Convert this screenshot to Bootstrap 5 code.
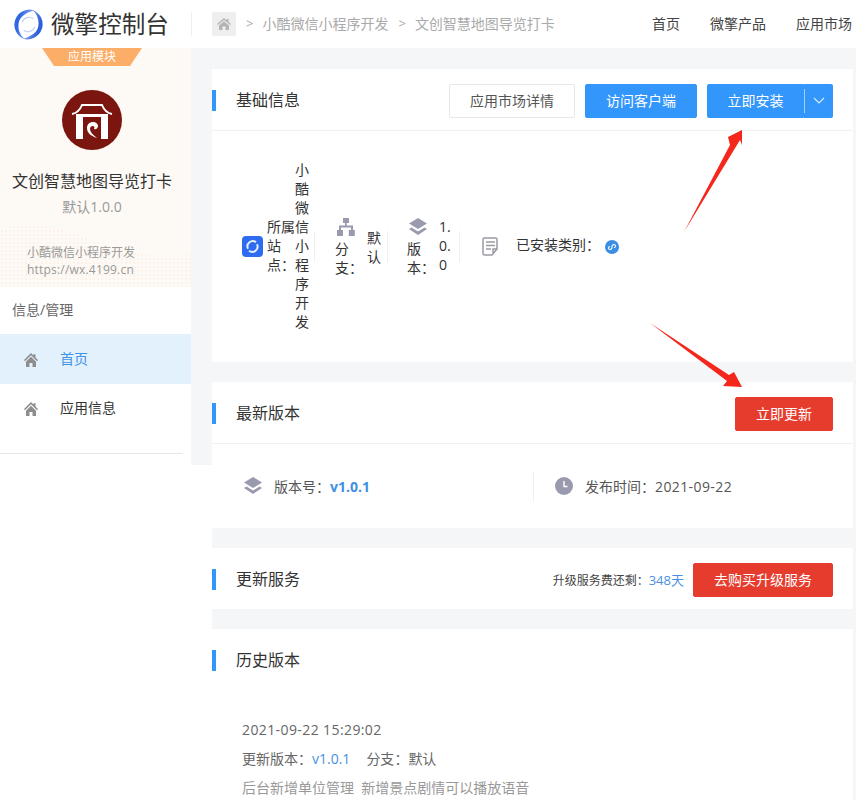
<!DOCTYPE html>
<html lang="zh-CN">
<head>
    <meta charset="UTF-8">
    <meta name="viewport" content="width=device-width, initial-scale=1.0">
    <title>微擎控制台</title>
    <link href="https://cdn.jsdelivr.net/npm/bootstrap@5.3.0/dist/css/bootstrap.min.css" rel="stylesheet">
    <style>
        html, body { height: 800px; overflow: hidden; }
        body { font-family: "Open Sans", "Noto Sans CJK SC", sans-serif; font-size: 14px; line-height: 19px; color: #333; background: #fff; position: relative; }
        .mid-colon { font-family: "Noto Sans CJK TC", sans-serif; }
        .date-num { letter-spacing: .4px; }

        /* шапка */
        .top-bar { height: 48px; }
        .brand-box { width: 191px; padding-left: 13px; gap: 7px; }
        .brand-text { font-size: 23.6px; line-height: 30px; color: #333; }
        .top-sep { width: 1px; height: 24px; background: #eee; }
        .crumbs { padding-left: 20px; color: #aaa; }
        .crumbs > span:not(.crumb-home) { margin-bottom: 2px; }
        .crumb-home { width: 24px; height: 24px; background: #eee; border-radius: 2px; }
        .crumb-gt { margin: 0 9px 0 10px; font-size: 13px; }
        .top-links { gap: 30px; padding: 0 4px 2px 0; color: #444; }

        /* левая колонка */
        .page-wrap { height: 752px; }
        .side-col { width: 191px; height: 417px; }
        .gray-strip { width: 21px; height: 417px; background: #f4f6f8; }
        .app-box { height: 239px; padding-right: 7px; background: #fdf9f5; overflow: hidden; position: relative; }
        .app-tab { width: 100px; height: 18px; margin: 0 auto; background: #fcae69; color: #fff; font-size: 12px; line-height: 18px; clip-path: polygon(0 0, 100% 0, 88% 100%, 12% 100%); }
        .app-logo { width: 60px; height: 60px; margin: 24px auto 0; }
        .app-name { margin-top: 20px; font-size: 16px; line-height: 22px; color: #333; }
        .app-ver { margin-top: 5px; color: #999; }
        .app-site { position: relative; margin-top: 28px; padding-left: 27px; font-size: 12px; line-height: 17px; color: #999; }
        .app-site-url { font-size: 12px; letter-spacing: .2px; }
        .dots-bg { position: absolute; left: 0; bottom: 0; }
        .side-head { height: 47px; padding: 13px 12px 0; color: #666; }
        .side-link { height: 50px; padding-left: 24px; gap: 22px; color: #333; }
        .side-link svg { margin-top: 2px; }
        .side-link span { margin-bottom: 2px; }
        .side-link.on-page { background: #e3f1fd; color: #3f93e8; }
        .side-link.short-link { height: 48px; }
        .side-line { margin: 21px 8px 0 0; height: 1px; background: #e6e6e6; }

        /* панели */
        .main-col { background: #f4f6f8; padding: 21px 3px 0 0; }
        .panel-box { border: 0; border-radius: 0; margin-bottom: 20px; }
        .panel-top { background: #fff; border-bottom: 1px solid #f1f1f1; border-radius: 0 !important; height: 62px; padding: 2px 20px 0 0; }
        .panel-top.no-line { border-bottom: 0; height: 61px; }
        .panel-title { border-left: 4px solid #3296fa; height: 21px; padding-left: 20px; font-size: 16px; line-height: 21px; color: #333; }
        .btn-group-gap { gap: 10px; }
        .btn-plain, .btn-blue, .btn-redd { height: 34px; border-radius: 2px; font-size: 14px; line-height: 32px; padding: 0; }
        .btn-plain { width: 126px; background: #fff; border: 1px solid #e8e8e8; color: #555; }
        .btn-blue { width: 112px; background: #3296fa; border: 1px solid #3296fa; color: #fff; }
        .btn-blue.split-main { width: 97px; border-radius: 2px 0 0 2px; }
        .split-arrow { width: 29px; height: 34px; background: #3296fa; border-radius: 0 2px 2px 0; position: relative; }
        .split-arrow::before { content: ""; position: absolute; left: 0; top: 5px; width: 1px; height: 24px; background: #a5cffb; }
        .btn-redd { background: #e63c2e; border: 1px solid #e63c2e; color: #fff; width: 98px; }
        .btn-redd.wide-btn { width: 140px; }

        .info-line { height: 231px; padding: 0 0 2px 30px; }
        .nudge-down { margin-top: 2px; }
        .cell-sep { width: 1px; height: 31px; background: #f0f0f0; }
        .narrow-label { width: 28px; }
        .narrow-value { width: 15px; word-break: break-all; }
        .stack-cell { width: 28px; margin-top: 4px; }
        .stack-icon { margin-left: 2px; margin-bottom: 3px; display: block; }
        .branch-cell { margin-left: 20px; }
        .branch-value { margin: 2px 0 0 4px; }
        .branch-sep { margin-left: 5px; }
        .version-cell { margin-left: 19px; }
        .version-value { margin-left: 4px; width: 14px; }
        .version-sep { margin-left: 6px; }
        .doc-icon { margin-left: 22px; }
        .doc-label { margin: 0 0 2px 17px; }
        .mini-icon { margin-left: 5px; }

        .ver-line { height: 84px; padding-left: 32px; color: #555; }
        .ver-left { width: 289px; gap: 12px; }
        .ver-num { color: #3f8fe4; font-weight: 700; font-size: 14px; }
        .ver-right { gap: 12px; padding-left: 21px; }
        .remain-text { font-size: 12px; color: #444; margin-right: 9px; }
        .remain-days { font-size: 13px; }
        .blue-text { color: #4a90e2; }

        .hist-body { padding: 30px 30px 0; color: #666; height: 130px; }
        .hist-row { margin-bottom: 10px; }
        .hist-note { color: #999; }

        .arrow-layer { position: absolute; left: 0; top: 0; pointer-events: none; }
    </style>
</head>
<body>
    <header class="top-bar d-flex align-items-center bg-white">
        <div class="brand-box d-flex align-items-center">
            <svg width="31" height="31" viewBox="0 0 32 32">
                <defs>
                    <linearGradient id="gr1" x1="0" y1="0.3" x2="1" y2="0.7"><stop offset="0.2" stop-color="#2f66e4"/><stop offset="1" stop-color="#b9c8f7"/></linearGradient>
                    <linearGradient id="gr2" x1="1" y1="0.7" x2="0" y2="0.3"><stop offset="0.2" stop-color="#2f5fdc"/><stop offset="1" stop-color="#b9c8f7"/></linearGradient>
                </defs>
                <path d="M22 1.500A15.500 15.500 0 0 0 12 31C7 27 4 19 6.500 12 8.500 7 15 3 22 1.500z" fill="url(#gr1)"/>
                <path d="M10 30.500A15.500 15.500 0 0 0 20 1C25 5 28 13 25.500 20 23.500 25 17 29 10 30.500z" fill="url(#gr2)"/>
                <path d="M21 10A7.500 7.500 0 0 0 9.500 13.500M11 22A7.500 7.500 0 0 0 22.500 18.500" fill="none" stroke="#c3cff7" stroke-width="1.200"/>
            </svg>
            <span class="brand-text">微擎控制台</span>
        </div>
        <span class="top-sep"></span>
        <div class="crumbs d-flex align-items-center flex-grow-1">
            <span class="crumb-home d-flex align-items-center justify-content-center">
                <svg width="14" height="12" viewBox="0 0 14 12"><path d="M7 0 0 6l1 1 6-5 6 5 1-1-2.500-2.100V1h-2v1.200zM2 7.500V12h3.500V8.500h3V12H12V7.500L7 3.300z" fill="#b5b5b5"/></svg>
            </span>
            <span class="crumb-gt">&gt;</span><span>小酷微信小程序开发</span><span class="crumb-gt">&gt;</span><span>文创智慧地图导览打卡</span>
        </div>
        <nav class="top-links d-flex">
            <span>首页</span><span>微擎产品</span><span>应用市场</span>
        </nav>
    </header>

    <div class="page-wrap d-flex">
        <aside class="side-col flex-shrink-0">
            <div class="app-box text-center">
                <svg class="dots-bg" width="191" height="70" viewBox="0 0 191 70">
                    <defs>
                        <pattern id="dotp" width="4" height="4" patternUnits="userSpaceOnUse"><circle cx="2" cy="2" r=".7" fill="#f9e5d3"/></pattern>
                    </defs>
                    <path d="M0 12C20 4 50 6 90 22s70 20 101 16V70H0z" fill="url(#dotp)"/>
                </svg>
                <div class="app-tab">应用模块</div>
                <svg class="app-logo d-block" viewBox="0 0 60 60">
                    <circle cx="30" cy="30" r="30" fill="#7a1510"/>
                    <path d="M10 24c5-1 8-4 10-9h20c2 5 5 8 10 9" fill="none" stroke="#fff" stroke-width="2"/>
                    <path d="M14 24h32v3H14zM14 27h7v22h-7zM39 27h7v22h-7z" fill="#fff"/>
                    <path d="M35 48c-6-2-10-5-10-10 0-4 3-6 6-6s5 2 5 4-2 4-4 3c1-2 0-3-1-3-2 0-3 1-3 3 0 3 3 6 7 9z" fill="#fff"/>
                </svg>
                <div class="app-name">文创智慧地图导览打卡</div>
                <div class="app-ver">默认1.0.0</div>
                <div class="app-site text-start">
                    <div>小酷微信小程序开发</div>
                    <div class="app-site-url">https://wx.4199.cn</div>
                </div>
            </div>
            <div class="side-head">信息/管理</div>
            <div class="side-link on-page d-flex align-items-center">
                <svg width="14" height="14" viewBox="0 0 14 12" preserveAspectRatio="none"><path d="M7 0 0 6l1 1 6-5 6 5 1-1-2.500-2.100V1h-2v1.200zM2 7.500V12h3.500V8.500h3V12H12V7.500L7 3.300z" fill="#8d8d8d"/></svg>
                <span>首页</span>
            </div>
            <div class="side-link short-link d-flex align-items-center">
                <svg width="14" height="14" viewBox="0 0 14 12" preserveAspectRatio="none"><path d="M7 0 0 6l1 1 6-5 6 5 1-1-2.500-2.100V1h-2v1.200zM2 7.500V12h3.500V8.500h3V12H12V7.500L7 3.300z" fill="#8d8d8d"/></svg>
                <span>应用信息</span>
            </div>
            <div class="side-line"></div>
        </aside>
        <div class="gray-strip flex-shrink-0"></div>

        <main class="main-col flex-grow-1">
            <section class="card panel-box">
                <div class="card-header panel-top d-flex align-items-center justify-content-between">
                    <div class="panel-title">基础信息</div>
                    <div class="d-flex btn-group-gap">
                        <button class="btn btn-plain">应用市场详情</button>
                        <button class="btn btn-blue">访问客户端</button>
                        <div class="d-flex">
                            <button class="btn btn-blue split-main">立即安装</button>
                            <span class="split-arrow d-flex align-items-center justify-content-center">
                                <svg width="12" height="7" viewBox="0 0 12 7"><path d="M1 1l5 5 5-5" fill="none" stroke="#d8ebfe" stroke-width="1.200"/></svg>
                            </span>
                        </div>
                    </div>
                </div>
                <div class="info-line d-flex align-items-center">
                    <svg class="me-1 flex-shrink-0 nudge-down" width="21" height="21" viewBox="0 0 21 21">
                        <rect width="21" height="21" rx="4" fill="#2f6bf0"/>
                        <path d="M14 6.200a5.300 5.300 0 0 0-8 6.500M7 14.800a5.300 5.300 0 0 0 8-6.500" fill="none" stroke="#e4eefe" stroke-width="2"/>
                    </svg>
                    <div class="narrow-label">
                        <div>所属</div>
                        <div>站</div>
                        <div>点<span class="mid-colon">：</span></div>
                    </div>
                    <div class="narrow-value">小酷微信小程序开发</div>
                    <span class="cell-sep ms-1 nudge-down"></span>
                    <div class="stack-cell branch-cell">
                        <svg class="stack-icon" width="18" height="18" viewBox="0 0 18 18"><path d="M6 0h6v5H9.700v2.500H16V12h1.800v6h-6v-6H14V9.500H4V12h2v6H0v-6h2V7.500h6V5H6z" fill="#9a9aaf"/></svg>
                        <div>分</div>
                        <div>支<span class="mid-colon">：</span></div>
                    </div>
                    <div class="narrow-value branch-value">默认</div>
                    <span class="cell-sep branch-sep nudge-down"></span>
                    <div class="stack-cell version-cell">
                        <svg class="stack-icon" width="18" height="18" viewBox="0 0 18 18"><path d="M9 0l9 5.500-9 5.500-9-5.500zM2.500 9.500 9 13.500l6.500-4 2.500 1.500L9 17 0 11z" fill="#9a9aaf"/></svg>
                        <div>版</div>
                        <div>本<span class="mid-colon">：</span></div>
                    </div>
                    <div class="narrow-value version-value">1.0.0</div>
                    <span class="cell-sep version-sep nudge-down"></span>
                    <svg class="flex-shrink-0 doc-icon nudge-down" width="17" height="19" viewBox="0 0 17 19"><path d="M1 2.500A1.500 1.500 0 0 1 2.500 1h11A1.500 1.500 0 0 1 15 2.500V12l-5 6H2.500A1.500 1.500 0 0 1 1 16.500zM4 5h9M4 8.500h9M4 12h5M15 12h-4v4" fill="none" stroke="#9a9aa5" stroke-width="1.500"/></svg>
                    <div class="doc-label">已安装类别<span class="mid-colon">：</span></div>
                    <svg class="mini-icon nudge-down" width="14" height="14" viewBox="0 0 14 14"><circle cx="7" cy="7" r="7" fill="#3a8ee6"/><path d="M5 9.500a1.500 1.500 0 1 1 0-3M5 9.500c1.500 0 2-1 2-2.500s.5-2.500 2-2.500a1.500 1.500 0 1 1 0 3" fill="none" stroke="#fff" stroke-width="1.100"/></svg>
                </div>
            </section>

            <section class="card panel-box">
                <div class="card-header panel-top d-flex align-items-center justify-content-between">
                    <div class="panel-title">最新版本</div>
                    <button class="btn btn-redd">立即更新</button>
                </div>
                <div class="ver-line d-flex align-items-center">
                    <div class="ver-left d-flex align-items-center">
                        <svg width="18" height="18" viewBox="0 0 18 18"><path d="M9 0l9 5.500-9 5.500-9-5.500zM2.500 9.500 9 13.500l6.500-4 2.500 1.500L9 17 0 11z" fill="#9a9aaf"/></svg>
                        <span>版本号<span class="mid-colon">：</span><span class="ver-num">v1.0.1</span></span>
                    </div>
                    <span class="cell-sep"></span>
                    <div class="ver-right d-flex align-items-center">
                        <svg width="18" height="18" viewBox="0 0 18 18"><circle cx="9" cy="9" r="9" fill="#9a9aaf"/><path d="M9 4v5.500h3.500" fill="none" stroke="#fff" stroke-width="1.400"/></svg>
                        <span>发布时间<span class="mid-colon">：</span><span class="date-num">2021-09-22</span></span>
                    </div>
                </div>
            </section>

            <section class="card panel-box">
                <div class="card-header panel-top no-line d-flex align-items-center justify-content-between">
                    <div class="panel-title">更新服务</div>
                    <div class="d-flex align-items-center">
                        <span class="remain-text">升级服务费还剩<span class="mid-colon">：</span><span class="blue-text remain-days">348天</span></span>
                        <button class="btn btn-redd wide-btn">去购买升级服务</button>
                    </div>
                </div>
            </section>

            <section class="card panel-box">
                <div class="card-header panel-top no-line d-flex align-items-center">
                    <div class="panel-title">历史版本</div>
                </div>
                <div class="hist-body">
                    <div class="hist-row date-num">2021-09-22 15:29:02</div>
                    <div class="hist-row">更新版本<span class="mid-colon">：</span><span class="blue-text">v1.0.1</span><span class="ms-3">分支<span class="mid-colon">：</span>默认</span></div>
                    <div class="hist-row hist-note">后台新增单位管理&nbsp;&nbsp;新增景点剧情可以播放语音</div>
                </div>
            </section>
        </main>
    </div>

    <!-- красные стрелки поверх страницы -->
    <svg class="arrow-layer" width="856" height="800" viewBox="0 0 856 800">
        <polygon points="684,232 730,145 728,137 742,130 742,145 740,140" fill="#f5261a"/>
        <polygon points="650,323 729,375 734,372 742,387 723,386 727,381" fill="#f5261a"/>
    </svg>

    <script src="https://cdn.jsdelivr.net/npm/bootstrap@5.3.0/dist/js/bootstrap.bundle.min.js"></script>
</body>
</html>
